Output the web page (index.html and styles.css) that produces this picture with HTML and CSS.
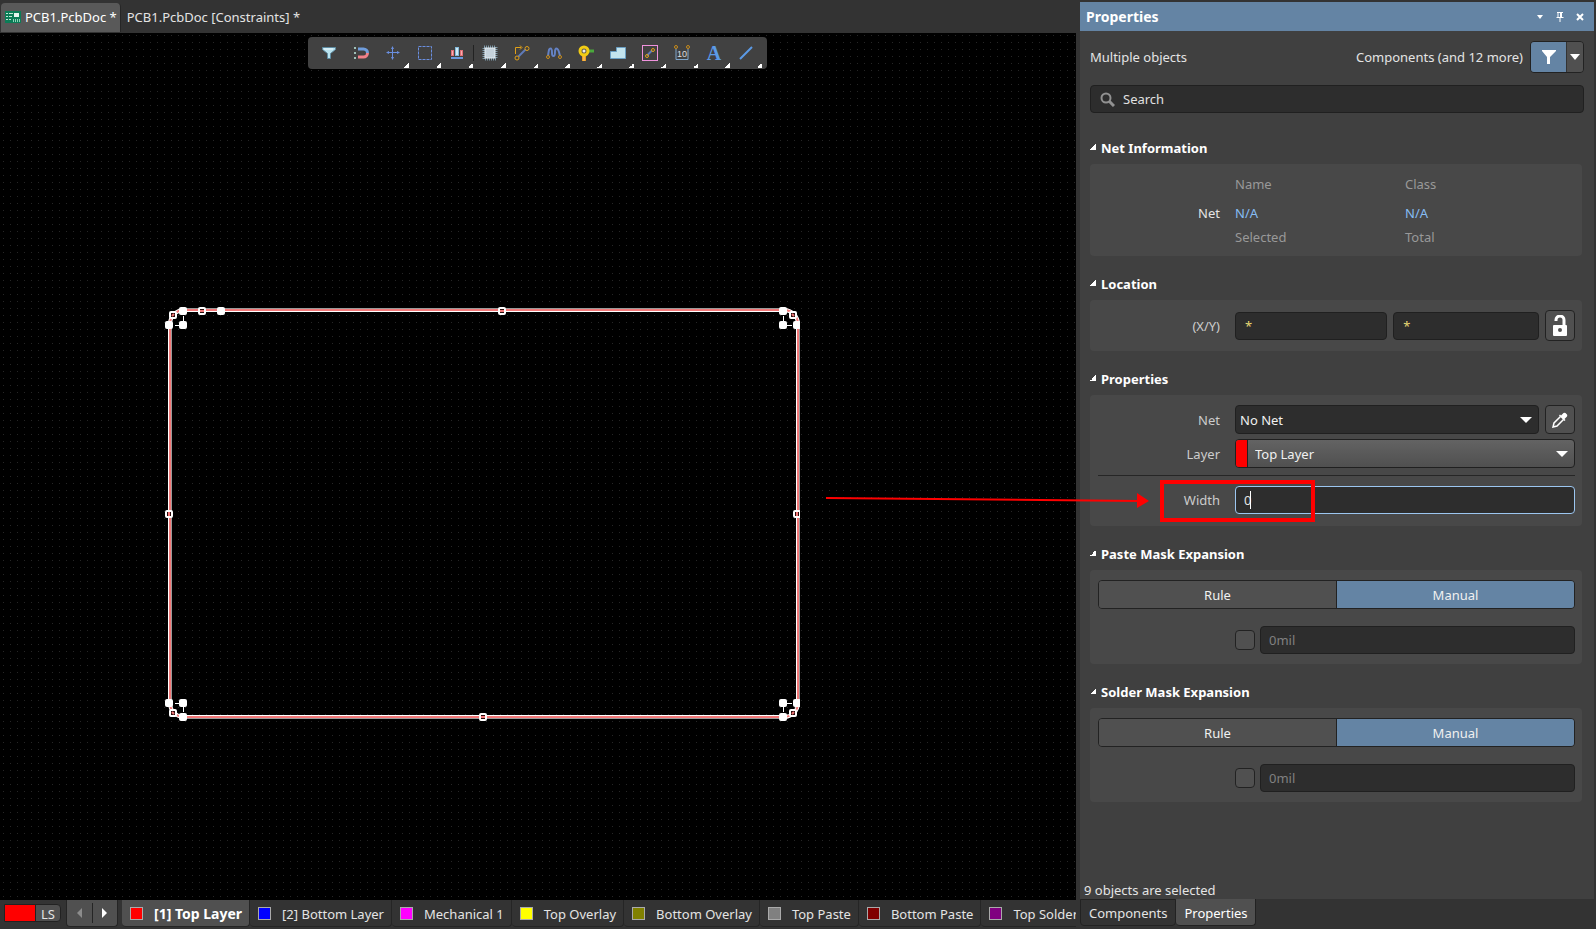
FILE: index.html
```html
<!DOCTYPE html>
<html lang="en">
<head>
<meta charset="utf-8">
<title>PCB1.PcbDoc</title>
<link rel="stylesheet" href="styles.css">
</head>
<body>
<div class="app">
  <main class="editor">
    <nav class="doc-tabs">
      <button class="doc-tab active">
        <svg width="16" height="12" viewBox="0 0 16 12"><rect width="16" height="12" fill="#0b7d57"/><path d="M1 2.500h2M1 5.500h2M1 8.500h2M4 2.500h4M4 5.500h3M4 8.500h2" stroke="#bfe8d6"/><rect x="9" y="2" width="5" height="4" fill="#e4f5ee"/><path d="M8.500 8v3M10.500 8v3M12.500 8v3M14.500 8v3" stroke="#8fd3b8"/></svg>
        <span>PCB1.PcbDoc *</span>
      </button>
      <button class="doc-tab"><span>PCB1.PcbDoc [Constraints] *</span></button>
    </nav>

    <section class="canvas">
      <svg class="grid-dots" width="100%" height="100%">
        <defs><pattern id="dots" width="7" height="7" patternUnits="userSpaceOnUse"><rect x="3" y="2" width="1" height="1" fill="#262626"/></pattern></defs>
        <rect width="100%" height="100%" fill="url(#dots)"/>
      </svg>
      <svg class="board" width="640" height="430" viewBox="160 300 640 430">
        <g fill="none">
          <rect x="170" y="310" width="628" height="407" rx="14" stroke="#fff" stroke-width="4"/>
          <rect x="170" y="310" width="628" height="407" rx="14" stroke="#f27878" stroke-width="2"/>
          <path d="M184 308.500h600M184 718.500h600M171.500 324v379M799.500 324v379" stroke="#9a9a9a"/>
          <path d="M183.500 316v5M175 325.500h5M783.500 316v5M787 325.500h5M183.500 707v5M175 703.500h5M783.500 707v5M787 703.500h5" stroke="#fff"/>
        </g>
        <g fill="#fff">
          <rect x="179" y="307" width="8" height="8" rx="2"/><rect x="165" y="321" width="8" height="8" rx="2"/><rect x="179" y="321" width="8" height="8" rx="2"/>
          <rect x="217" y="307" width="8" height="8" rx="2"/>
          <rect x="779" y="307" width="8" height="8" rx="2"/><rect x="793" y="321" width="8" height="8" rx="2"/><rect x="779" y="321" width="8" height="8" rx="2"/>
          <rect x="165" y="699" width="8" height="8" rx="2"/><rect x="179" y="699" width="8" height="8" rx="2"/><rect x="179" y="713" width="8" height="8" rx="2"/>
          <rect x="793" y="699" width="8" height="8" rx="2"/><rect x="779" y="699" width="8" height="8" rx="2"/><rect x="779" y="713" width="8" height="8" rx="2"/>
        </g>
        <g fill="#2a0c0c" stroke="#fff" stroke-width="2">
          <rect x="170" y="312" width="6" height="6" rx="1"/><rect x="199" y="308" width="6" height="6" rx="1"/><rect x="499" y="308" width="6" height="6" rx="1"/>
          <rect x="790" y="312" width="6" height="6" rx="1"/><rect x="166" y="511" width="6" height="6" rx="1"/><rect x="794" y="511" width="6" height="6" rx="1"/>
          <rect x="170" y="710" width="6" height="6" rx="1"/><rect x="480" y="714" width="6" height="6" rx="1"/><rect x="790" y="710" width="6" height="6" rx="1"/>
        </g>
        <path d="M200 311h4M500 311h4M481 717h4M169 512v4M797 512v4M172 316l2-2M792 314l2 2M172 712l2 2M792 714l2-2" stroke="#f27878" stroke-width="2"/>
      </svg>

      <div class="toolbar" role="toolbar" aria-label="Active bar">
        <button class="tool" aria-label="Filter"><svg width="16" height="16"><path d="M1.500 2.500h13v2l-5 4v5h-3v-5l-5-4z" fill="#b9e2ee" stroke="#5d8aa0"/><path d="M3 4h9" stroke="#f1fbff"/></svg></button>
        <button class="tool" aria-label="Snap"><svg width="16" height="16"><path d="M5 4h5.500a4 4 0 0 1 4 4" fill="none" stroke="#6f9ddc" stroke-width="3"/><path d="M5 12h5.500a4 4 0 0 0 4-4" fill="none" stroke="#f08088" stroke-width="3"/><path d="M1 3h2M1 8h2M1 13h2" stroke="#9fc0b8" stroke-width="2"/></svg></button>
        <button class="tool menu" aria-label="Move"><svg width="16" height="16"><path d="M7.500 2v12M2 7.500h12" stroke="#6a8fe0"/><path d="M6 4l1.500-3L9 4M6 12l1.500 3L9 12M4 6L1 7.500 4 9M12 6l3 1.500L12 9" fill="#6a8fe0"/></svg></button>
        <button class="tool menu" aria-label="Select area"><svg width="16" height="16"><rect x="1.500" y="1.500" width="13" height="13" fill="none" stroke="#6a8fe0" stroke-dasharray="3 1"/></svg></button>
        <button class="tool menu" aria-label="Align"><svg width="16" height="16"><rect x="2.500" y="5.500" width="2" height="5" fill="#f7b0b0" stroke="#e07078"/><rect x="11.500" y="5.500" width="2" height="5" fill="#f7b0b0" stroke="#e07078"/><rect x="6.500" y="2.500" width="3" height="8" fill="#cfeaf5" stroke="#82b8d8"/><path d="M2 13h12" stroke="#6a98dc" stroke-width="2"/></svg></button>
        <span class="sep"></span>
        <button class="tool menu" aria-label="Component"><svg width="16" height="16"><rect x="2" y="2" width="12" height="12" fill="none" stroke="#7f9aaa" stroke-width="3" stroke-dasharray="1 1"/><rect x="3" y="3" width="10" height="10" fill="#c6d3dc" stroke="#e4eef4"/></svg></button>
        <button class="tool menu" aria-label="Route"><svg width="16" height="16" fill="none"><path d="M4.500 11.500l7-7" stroke="#5f7ab8" stroke-width="2"/><path d="M1.500 9V2.500H7M6 0.500l2 2-2 2" stroke="#e0a018"/><circle cx="3" cy="13" r="2" stroke="#e0a018"/><circle cx="13" cy="3.500" r="2" stroke="#e0a018"/></svg></button>
        <button class="tool menu" aria-label="Tune"><svg width="16" height="16" fill="none"><path d="M2 11C3 4 3 3.500 4.500 3.500S6 6 6 8s0 3 1.500 3S9 9 9 7s0-3.500 1.500-3.500S13 6 14 11" stroke="#6482c4" stroke-width="2"/><circle cx="2" cy="12" r="1.500" stroke="#c88c1c"/><circle cx="14" cy="12" r="1.500" stroke="#c88c1c"/></svg></button>
        <button class="tool menu" aria-label="Via"><svg width="16" height="16"><path d="M11 6h5" stroke="#4aa83c" stroke-width="3"/><path d="M6 10v6" stroke="#ee9c20" stroke-width="4"/><path d="M6 11v5" stroke="#f8d080"/><circle cx="6" cy="6" r="4" fill="#6a6250" stroke="#f2cc14" stroke-width="3"/><circle cx="6" cy="6" r="1.500" fill="#eee"/></svg></button>
        <button class="tool menu" aria-label="Polygon"><svg width="16" height="16"><path d="M.500 13.500v-7h6v-4h9v11z" fill="#c3e4ee" stroke="#6a9fc4"/></svg></button>
        <button class="tool menu" aria-label="Keepout"><svg width="16" height="16" fill="none"><rect x=".500" y=".500" width="15" height="15" stroke="#f092dc"/><path d="M5 10.500l5-5" stroke="#5f7ab8" stroke-width="2"/><circle cx="5" cy="11" r="1.500" stroke="#e0a018"/><circle cx="11" cy="5" r="1.500" stroke="#e0a018"/></svg></button>
        <button class="tool menu" aria-label="Dimension"><svg width="16" height="16" fill="none"><path d="M2 4v10.500h12V4" stroke="#7fa6cc"/><circle cx="2" cy="2" r="1.500" stroke="#c88c1c"/><circle cx="14" cy="2" r="1.500" stroke="#c88c1c"/><text x="8" y="12" text-anchor="middle" class="dim-text">10</text></svg></button>
        <button class="tool menu letter" aria-label="Text">A</button>
        <button class="tool menu" aria-label="Line"><svg width="16" height="16"><path d="M2 14L14 2" stroke="#5b9ae6" stroke-width="2"/></svg></button>
      </div>
    </section>

    <footer class="layer-bar">
      <button class="layer-set"><i></i><span>LS</span></button>
      <div class="layer-nav">
        <button aria-label="Previous layers" disabled><svg width="6" height="10"><path d="M6 0v10L1 5z" fill="#8c8c8c"/></svg></button>
        <button aria-label="Next layers"><svg width="6" height="10"><path d="M0 0v10l5-5z" fill="#fff"/></svg></button>
      </div>
      <button class="layer active"><i class="red"></i>[1] Top Layer</button>
      <button class="layer"><i class="blue"></i>[2] Bottom Layer</button>
      <button class="layer"><i class="magenta"></i>Mechanical 1</button>
      <button class="layer"><i class="yellow"></i>Top Overlay</button>
      <button class="layer"><i class="olive"></i>Bottom Overlay</button>
      <button class="layer"><i class="gray"></i>Top Paste</button>
      <button class="layer"><i class="maroon"></i>Bottom Paste</button>
      <button class="layer"><i class="purple"></i>Top Solder</button>
    </footer>
  </main>

  <aside class="side">
    <div class="panel">
      <header class="panel-head">
        <h1>Properties</h1>
        <button aria-label="Panel menu"><svg width="8" height="8"><path d="M1 2h6L4 6z" fill="#fff"/></svg></button>
        <button aria-label="Pin"><svg width="8" height="10"><path d="M1 .500h6M2 0v5M.500 5.500h7M4 6v4" stroke="#fff" fill="none"/><path d="M4 1h2v4H4z" fill="#fff"/></svg></button>
        <button aria-label="Close"><svg width="8" height="8"><path d="M1 1l6 6M7 1L1 7" stroke="#fff" stroke-width="2"/></svg></button>
      </header>
      <div class="panel-body">
        <div class="summary">
          <span>Multiple objects</span>
          <span class="kinds">Components (and 12 more)</span>
          <div class="filter">
            <button class="filter-main" aria-label="Filter"><svg width="16" height="14"><path d="M1 0h14v1L9 7v7H6V7L1 1z" fill="#fff"/></svg></button>
            <button class="filter-more" aria-label="Filter options"><svg width="10" height="6"><path d="M0 0h10L5 6z" fill="#fff"/></svg></button>
          </div>
        </div>
        <label class="search">
          <svg width="15" height="15" fill="none" stroke="#919191"><circle cx="6" cy="6" r="4.500" stroke-width="2"/><path d="M9 9l5 5" stroke-width="3"/></svg>
          <input type="text" placeholder="Search" aria-label="Search">
        </label>

        <h2 class="first">Net Information</h2>
        <table class="card net-info">
          <thead><tr><td></td><th>Name</th><th>Class</th></tr></thead>
          <tbody>
            <tr class="net"><th>Net</th><td><a href="#">N/A</a></td><td><a href="#">N/A</a></td></tr>
            <tr class="counts"><td></td><td>Selected</td><td>Total</td></tr>
          </tbody>
        </table>

        <h2>Location</h2>
        <div class="card">
          <div class="row">
            <label for="loc-x">(X/Y)</label>
            <div class="controls">
              <input class="field star x" id="loc-x" type="text" value="*">
              <input class="field star y" type="text" value="*" aria-label="Y">
              <button class="square" aria-label="Unlock"><svg width="16" height="22"><path d="M4 6V5a4 4 0 0 1 8 0v5" fill="none" stroke="#fff" stroke-width="3"/><rect x="1" y="10" width="14" height="11" rx="1" fill="#fff"/><circle cx="8" cy="15" r="2" fill="#505050"/></svg></button>
            </div>
          </div>
        </div>

        <h2>Properties</h2>
        <div class="card props">
          <div class="row">
            <label for="net">Net</label>
            <div class="controls">
              <span class="select"><select id="net"><option>No Net</option></select></span>
              <button class="square" aria-label="Pick net"><svg width="16" height="16"><path d="M8.500 4.500L2 11l-1 4 4-1 6.500-6.500" fill="none" stroke="#fff" stroke-width="1.500"/><path d="M7 3.500L12.500 9l1-1-1-1L15 4.500a2 2 0 0 0 0-2L13.500 1a2 2 0 0 0-2 0L9 3.500l-1-1z" fill="#fff"/></svg></button>
            </div>
          </div>
          <div class="row">
            <label for="layer">Layer</label>
            <span class="select layered"><i></i><select id="layer"><option>Top Layer</option></select></span>
          </div>
          <hr>
          <div class="row width-row">
            <label for="width">Width</label>
            <div class="editing"><input class="field" id="width" type="text" value="0"><i class="caret"></i></div>
            <svg class="arrow" width="326" height="20"><path d="M0 7L314 10" stroke="#f00" stroke-width="2"/><path d="M311 2l12 8-12 7z" fill="#f00"/></svg>
            <div class="mark"></div>
          </div>
        </div>

        <h2>Paste Mask Expansion</h2>
        <div class="card">
          <div class="segments"><button>Rule</button><button class="on">Manual</button></div>
          <div class="row">
            <span></span>
            <div class="controls tight"><input type="checkbox" aria-label="Override paste mask"><input class="field" type="text" value="0mil" aria-label="Paste mask expansion" disabled></div>
          </div>
        </div>

        <h2>Solder Mask Expansion</h2>
        <div class="card">
          <div class="segments"><button>Rule</button><button class="on">Manual</button></div>
          <div class="row">
            <span></span>
            <div class="controls tight"><input type="checkbox" aria-label="Override solder mask"><input class="field" type="text" value="0mil" aria-label="Solder mask expansion" disabled></div>
          </div>
        </div>
      </div>
      <p class="status">9 objects are selected</p>
    </div>
    <nav class="panel-tabs"><button>Components</button><button class="active">Properties</button></nav>
  </aside>
</div>
</body>
</html>
```

FILE: styles.css
```css
* { box-sizing: border-box; }
body { margin: 0; background: #333; color: #e4e4e4; font: 13px/20px "Noto Sans", sans-serif; }
button, input, select { font: inherit; color: inherit; margin: 0; }
button { padding: 0; border: 0; background: none; }
svg { display: block; flex: none; }
h1, h2, p { margin: 0; font-size: inherit; }

.app { display: flex; gap: 4px; min-height: 100vh; padding-right: 2px; }
.editor { flex: 1; min-width: 0; display: flex; flex-direction: column; }

.doc-tabs { display: flex; height: 33px; padding: 3px 0 1px 1px; }
.doc-tab { display: flex; align-items: center; gap: 4px; padding: 0 6px 2px; white-space: nowrap; }
.doc-tab.active { padding: 0 3px 2px 4px; background: #595959; border-right: 1px solid #262626; border-radius: 4px 4px 0 0; color: #fff; }

.canvas { position: relative; flex: 1; overflow: hidden; background: #000; }
.grid-dots { position: absolute; inset: 0; }
.board { position: absolute; left: 160px; top: 267px; }
.toolbar { position: absolute; left: 308px; top: 4px; display: flex; height: 32px; padding: 0 5px; background: #414141; border-radius: 4px; }
.tool { position: relative; display: grid; place-items: center; width: 32px; }
.tool.menu::after { content: ""; position: absolute; right: 0; bottom: 1px; width: 5px; height: 5px; background: linear-gradient(135deg, transparent 50%, #fff 50%); }
.sep { width: 1px; height: 16px; margin-top: 8px; background: #222; }
.letter { font: bold 20px/20px "Liberation Serif", serif; color: #5b9ae6; }
.dim-text { font: 9px "Liberation Sans", sans-serif; fill: #ddd; }

.layer-bar { display: flex; align-items: flex-start; height: 29px; overflow: hidden; white-space: nowrap; }
.layer-bar > * { flex: none; }
.layer-set { display: flex; height: 18px; margin: 4px 5px 0 4px; border: 1px solid #222; border-radius: 0 4px 4px 0; background: #505050; line-height: 18px; }
.layer-set i { width: 31px; background: #f00; border-right: 1px solid #222; }
.layer-set span { width: 24px; padding-left: 5px; text-align: left; }
.layer-nav { display: flex; height: 27px; width: 52px; margin-right: 4px; padding: 3px 0; background: #505050; border: 1px solid #252525; border-top: 0; border-radius: 0 0 4px 4px; }
.layer-nav button { flex: 1; display: grid; place-items: center; }
.layer-nav button + button { border-left: 1px solid #252525; }
.layer { display: flex; align-items: center; height: 27px; padding: 1px 7px 0 8px; border: solid #252525; border-width: 0 1px 1px 0; border-radius: 0 0 4px 4px; }
.layer.active { background: #505050; color: #fff; font-weight: bold; font-size: 14px; }
.layer i { width: 13px; height: 13px; margin-right: 11px; border: 1px solid #aaa; }
.red { background: #f00; } .blue { background: #00f; } .magenta { background: #f0f; } .yellow { background: #ff0; }
.olive { background: #808000; } .gray { background: #808080; } .maroon { background: #800000; } .purple { background: #800080; }

.side { width: 514px; flex: none; display: flex; flex-direction: column; padding-top: 2px; }
.panel { flex: 1; display: flex; flex-direction: column; background: #404040; }
.panel-head { display: flex; align-items: center; gap: 12px; height: 29px; padding: 0 10px 0 6px; background: #6484a4; color: #fff; }
.panel-head h1 { flex: 1; font-size: 14px; }
.panel-body { flex: 1; padding: 10px 12px 0 10px; }
.summary { display: flex; align-items: center; margin-right: -2px; }
.kinds { margin-left: auto; padding-right: 7px; }
.filter { display: flex; height: 32px; width: 54px; border: 1px solid #222; border-radius: 4px; overflow: hidden; }
.filter button { display: grid; place-items: center; }
.filter-main { flex: 1; background: #6484a4; }
.filter-more { width: 17px; background: #505050; border-left: 1px solid #333; }
.search { display: flex; align-items: center; gap: 8px; height: 28px; margin: 12px -2px 0 0; padding: 0 9px; background: #2d2d2d; border: 1px solid #202020; border-radius: 4px; }
.search input { flex: 1; border: 0; padding: 0; background: none; outline: 0; }
.search input::placeholder { color: #e0e0e0; opacity: 1; }

h2 { display: flex; align-items: center; gap: 5px; margin: 18px 0 6px; color: #fff; }
h2::before { content: ""; width: 6px; height: 6px; margin-bottom: 2px; background: linear-gradient(135deg, transparent 50%, #fff 50%); }
h2.first { margin-top: 25px; }
.card { width: 100%; padding: 10px 7px 10px 8px; background: #484848; border-radius: 4px; }

.net-info { padding: 5px 7px 9px 8px; border-spacing: 0; table-layout: fixed; color: #999; text-align: left; }
.net-info th { font-weight: normal; }
.net-info th, .net-info td { padding: 0; height: 30px; }
.net-info tr > :first-child { width: 137px; padding-right: 15px; text-align: right; }
.net-info .net > * { height: 28px; }
.net-info .counts > * { height: 20px; }
.net-info .net th { color: #e4e4e4; }
.net-info a { color: #86bdf4; text-decoration: none; }

.row { display: grid; grid-template-columns: 122px minmax(0, 1fr); column-gap: 15px; align-items: center; }
.row > label { text-align: right; color: #ccc; }
.controls { display: flex; align-items: center; gap: 6px; }
.field { flex: 1; min-width: 0; width: 100%; height: 28px; padding: 0 8px; background: #2d2d2d; border: 1px solid #202020; border-radius: 4px; outline: 0; }
.field:disabled { color: #808080; }
.field.star { color: #e6d874; padding: 0 9px; }
.field.x { flex: 21; }
.field.y { flex: 20; }
.square { flex: none; display: grid; place-items: center; width: 30px; height: 31px; background: #505050; border: 1px solid #222; border-radius: 4px; }
.props .square { height: 29px; }
.select { position: relative; flex: 1; display: flex; height: 29px; background: #2d2d2d; border: 1px solid #202020; border-radius: 4px; overflow: hidden; }
.select select { flex: 1; appearance: none; border: 0; outline: 0; padding: 0 4px; background: none; color: #f0f0f0; }
.select::after { content: ""; position: absolute; right: 6px; top: 11px; border: solid transparent; border-width: 6px 6px 0; border-top-color: #fff; pointer-events: none; }
.layered { background: linear-gradient(#636363, #505050); }
.layered i { width: 12px; background: #f00; border-right: 1px solid #222; }
.layered select { padding-left: 7px; }
.props { display: flex; flex-direction: column; padding-bottom: 12px; }
.props .row + .row { margin-top: 5px; }
.props hr { width: 100%; height: 1px; margin: 7px 0 10px; border: 0; background: #262626; }
.width-row { position: relative; }
.editing { position: relative; }
.editing .field { display: block; border-color: #9cc6f0; caret-color: transparent; }
.caret { position: absolute; left: 15px; top: 5px; width: 1px; height: 18px; background: #fff; }
.arrow { position: absolute; left: -272px; top: 5px; }
.mark { position: absolute; left: 62px; top: -6px; width: 155px; height: 42px; border: 4px solid #f00; pointer-events: none; }

.segments { display: flex; height: 29px; margin-bottom: 17px; border: 1px solid #222; border-radius: 4px; overflow: hidden; }
.segments button { flex: 1; background: #505050; color: #f0f0f0; }
.segments .on { background: #6484a4; border-left: 1px solid #222; }
.tight { gap: 5px; }
input[type="checkbox"] { appearance: none; flex: none; width: 20px; height: 20px; background: #505050; border: 1px solid #222; border-radius: 4px; }

.status { padding: 0 4px; margin-bottom: -1px; }
.panel-tabs { display: flex; height: 30px; }
.panel-tabs button { height: 27px; padding: 0 8px; border: 1px solid #222; border-radius: 0 0 4px 4px; }
.panel-tabs .active { padding: 1px 7px 0 8px; background: #505050; color: #fff; border-width: 0 1px 1px 0; }
```
